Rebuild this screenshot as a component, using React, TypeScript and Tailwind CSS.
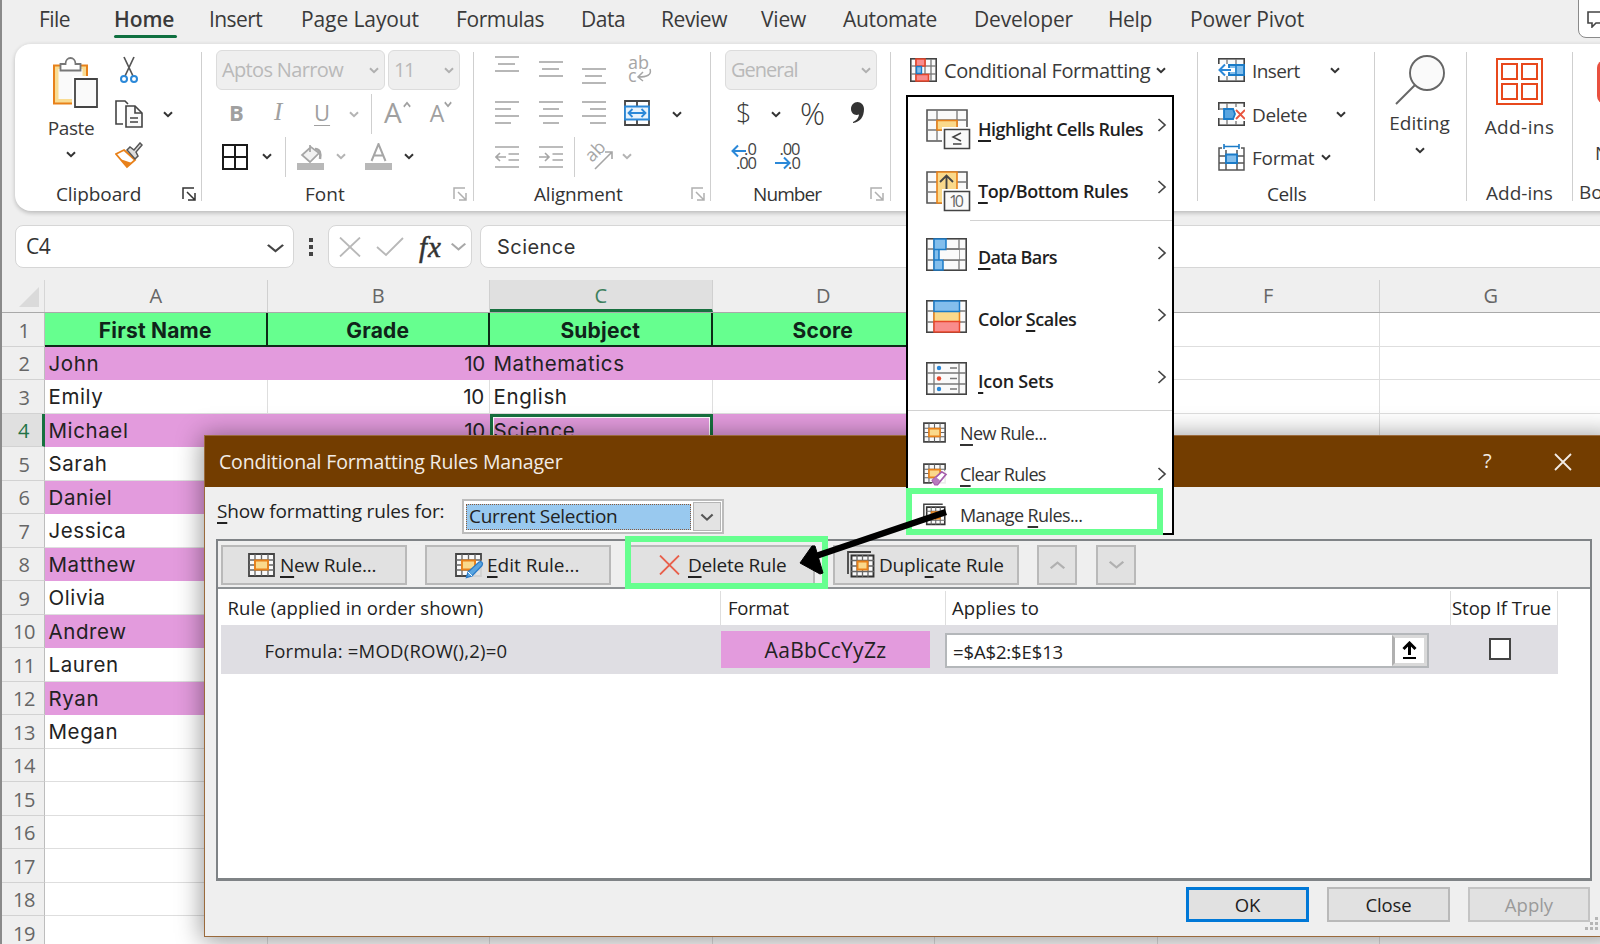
import type { ReactNode } from "react";

const cx = (...parts: (string | undefined)[]) => parts.filter(Boolean).join(" ");

/* ---------- shared primitives ---------- */

function T({ c, children }: { c?: string; children: ReactNode }) {
  return <span className={cx("block shrink-0 whitespace-nowrap", c)}>{children}</span>;
}

function Chevron({ c, color = "#333333", w = 10, sw = 2 }: { c?: string; color?: string; w?: number; sw?: number }) {
  return (
    <svg className={cx("block shrink-0", c)} width={w} height="7" viewBox="0 0 10 7" preserveAspectRatio="none" fill="none" stroke={color} strokeWidth={sw}>
      <path d="M1 1.2 5 5.2 9 1.2" />
    </svg>
  );
}

function MenuArrow() {
  return (
    <svg className="block shrink-0" width="10" height="16" viewBox="0 0 10 16" fill="none" stroke="#444" strokeWidth="1.7">
      <path d="M1.500 2 8 8l-6.500 6" />
    </svg>
  );
}

function Launcher({ c, color }: { c?: string; color: string }) {
  return (
    <svg className={cx("block shrink-0", c)} width="14" height="14" viewBox="0 0 14 14" fill="none" stroke={color} strokeWidth="1.5">
      <path d="M1 12V1h11M5 5l7.5 7.5M13 6v7H6" />
    </svg>
  );
}

function Grid({ w, h, xs, ys, children, c }: { w: number; h: number; xs: number[]; ys: number[]; children?: ReactNode; c?: string }) {
  return (
    <svg className={cx("block shrink-0", c)} width={w} height={h} viewBox={`0 0 ${w} ${h}`} fill="none">
      <rect x="0.8" y="0.8" width={w - 1.6} height={h - 1.6} fill="#fafafa" stroke="#444" strokeWidth="1.6" />
      <g stroke="#777" strokeWidth="1.3">
        {xs.map((x) => (
          <path key={`x${x}`} d={`M${x} 1V${h - 1}`} />
        ))}
        {ys.map((y) => (
          <path key={`y${y}`} d={`M1 ${y}H${w - 1}`} />
        ))}
      </g>
      {children}
    </svg>
  );
}

const Divider = () => <div className="mt-2 h-[149px] w-px shrink-0 bg-[#cfcfcf]" />;

/* ---------- ribbon icons ---------- */

const PasteIcon = () => (
  <svg className="ml-[8px] block" width="47" height="52" viewBox="0 0 47 52" fill="none">
    <path d="M2 8.500h33v38H2z" fill="#f9dc93" stroke="#e8811a" strokeWidth="2" />
    <path d="M6.500 12h24v30h-24z" fill="#fafafa" />
    <path d="M8.500 13.500V7h5c0-8 10-8 10 0h5v6.500z" fill="#fff" stroke="#777" strokeWidth="1.8" />
    <path d="M20 19h27v33H20z" fill="#fff" />
    <path d="M23 22h22v28H23z" fill="#fafafa" stroke="#444" strokeWidth="1.8" />
  </svg>
);

const ScissorsIcon = () => (
  <svg className="block" width="18" height="28" viewBox="0 0 18 28" fill="none">
    <path d="M4 1 13 20M14 1 5 20" stroke="#555" strokeWidth="1.7" />
    <circle cx="4" cy="23" r="3" stroke="#2b88d8" strokeWidth="2" />
    <circle cx="14" cy="23" r="3" stroke="#2b88d8" strokeWidth="2" />
  </svg>
);

const CopyIcon = () => (
  <svg className="block" width="28" height="28" viewBox="0 0 28 28" fill="none" stroke="#444" strokeWidth="1.6">
    <path d="M8 24H1V1h9l3 3" />
    <path d="M11 6h9l7 7v14H11z" fill="#fafafa" />
    <path d="M20 6v7h7M15 18h8M15 22h8" />
  </svg>
);

const BrushIcon = () => (
  <svg className="-mt-1 block" width="28" height="27" viewBox="0 0 28 27" fill="none">
    <path d="M9 8 20 18 12 25 1 12z" fill="#fff" stroke="#e8811a" strokeWidth="1.8" />
    <path d="M5 17 12 25l5-4z" fill="#e8811a" />
    <path d="m12 8 3-3 4 3 6-7 2 2-6 7 2 4-3 3z" fill="#ddd" stroke="#555" strokeWidth="1.5" />
  </svg>
);

const BordersIcon = ({ c }: { c?: string }) => (
  <svg className={cx("block shrink-0", c)} width="26" height="26" viewBox="0 0 26 26" fill="none" stroke="#1a1a1a" strokeWidth="2">
    <path d="M1 1h24v24H1zM13 1v24M1 13h24" />
  </svg>
);

const BucketIcon = ({ c }: { c?: string }) => (
  <svg className={cx("block shrink-0", c)} width="27" height="27" viewBox="0 0 27 27" fill="none">
    <path d="M0 20h27v7H0z" fill="#b8b8b8" />
    <path d="M13 2v7M14 4 5 12l8 7 9-9z" stroke="#a6a6a6" strokeWidth="1.7" fill="#f2f2f2" />
    <path d="M18 6c5 0 6 4 5 10" stroke="#a6a6a6" strokeWidth="2.5" />
  </svg>
);

const FontColorIcon = ({ c }: { c?: string }) => (
  <svg className={cx("block shrink-0", c)} width="27" height="27" viewBox="0 0 27 27">
    <path d="M0 20h27v7H0z" fill="#b8b8b8" />
    <path d="M6.500 18 13.500 1l7 17M9 12.500h9" stroke="#a6a6a6" strokeWidth="2" fill="none" />
  </svg>
);

function Lines({ c, rows, color = "#a6a6a6" }: { c?: string; rows: [number, number, number][]; color?: string }) {
  return (
    <svg className={cx("block shrink-0", c)} width="24" height="28" viewBox="0 0 24 28" stroke={color} strokeWidth="1.6">
      {rows.map(([y, a, b]) => (
        <path key={y} d={`M${a} ${y}H${b}`} />
      ))}
    </svg>
  );
}

const IndentIcon = ({ c, flip }: { c?: string; flip?: boolean }) => (
  <svg className={cx("block shrink-0", c)} width="24" height="24" viewBox="0 0 24 24" stroke="#a6a6a6" strokeWidth="1.6" fill="none">
    <path d="M0 2h24M13.500 9H24M13.500 15H24M0 22h24" />
    {flip ? <path d="M0 12h10M6 8l4 4-4 4" /> : <path d="M11 12H1M5 8l-4 4 4 4" />}
  </svg>
);

const WrapIcon = ({ c }: { c?: string }) => (
  <svg className={cx("block shrink-0", c)} width="26" height="30" viewBox="0 0 26 30" fill="none">
    <text x="1" y="14" fontFamily="Open Sans, sans-serif" fontSize="18" fill="#a6a6a6">ab</text>
    <text x="1" y="27" fontFamily="Open Sans, sans-serif" fontSize="18" fill="#a6a6a6">c</text>
    <path d="M23 14c2 6-3 8-12 8M16 17l-5 5 5 4" stroke="#a6a6a6" strokeWidth="1.5" />
  </svg>
);

const MergeIcon = ({ c }: { c?: string }) => (
  <svg className={cx("block shrink-0", c)} width="26" height="26" viewBox="0 0 26 26" fill="none">
    <path d="M1 1h24v24H1zM13 1v24" stroke="#444" strokeWidth="1.8" />
    <path d="M1 6.500h24v13H1z" fill="#e8f3fc" stroke="#2b88d8" strokeWidth="1.8" />
    <path d="M4.500 13h17M8.500 9l-4 4 4 4M17.500 9l4 4-4 4" stroke="#2b88d8" strokeWidth="1.800" />
  </svg>
);

const OrientationIcon = ({ c }: { c?: string }) => (
  <svg className={cx("block shrink-0", c)} width="29" height="27" viewBox="0 0 29 27" fill="none">
    <text x="0" y="0" transform="translate(7 20) rotate(-45)" fontFamily="Open Sans, sans-serif" fontSize="18" fill="#a6a6a6">ab</text>
    <path d="M10 26 27 9M20 9h7v7" stroke="#a6a6a6" strokeWidth="1.6" />
  </svg>
);

const CommaIcon = ({ c }: { c?: string }) => (
  <svg className={cx("block shrink-0", c)} width="14" height="22" viewBox="0 0 14 22" fill="#333">
    <path d="M6.500 0C10 0 13 3 13 7c0 8-4 13-11 14v-1c4-2 5.500-4 6-7.500C3.500 14 0 11 0 7s3-7 6.500-7z" />
  </svg>
);

const DecimalIcon = ({ c, inc }: { c?: string; inc?: boolean }) => (
  <svg className={cx("block shrink-0", c)} width="28" height="27" viewBox="0 0 28 27" fill="none">
    <g fontFamily="Open Sans, sans-serif" fontSize="16.5" fill="#444">
      <text x={inc ? 13 : 4.500} y="12" textLength={inc ? 13 : 21}>{inc ? ".0" : ".00"}</text>
      <text x={inc ? 5 : 13} y="26" textLength={inc ? 21 : 13}>{inc ? ".00" : ".0"}</text>
    </g>
    {inc ? (
      <path d="M15 8H1M7 2.500 1.500 8 7 13.500" stroke="#2b88d8" strokeWidth="2" />
    ) : (
      <path d="M0 20h14M9 14.500l5.500 5.500L9 25.500" stroke="#2b88d8" strokeWidth="2" />
    )}
  </svg>
);

const CondIcon = ({ c }: { c?: string }) => (
  <Grid c={c} w={27} h={24} xs={[6, 15, 21]} ys={[8, 16]}>
    <path d="M6 1h9v7H6zM6 16.500h12.500V23H6z" fill="#f98c8c" stroke="#e8452a" strokeWidth="1.6" />
    <path d="M6.500 8.500h5v7h-5z" fill="#83beec" stroke="#1a7bc8" strokeWidth="1.400" />
  </Grid>
);

const InsertCellsIcon = ({ c }: { c?: string }) => (
  <Grid c={c} w={27} h={24} xs={[9, 18]} ys={[7, 17]}>
    <path d="M0 6h10v12H0z" fill="#fff" />
    <path d="M11 7h15v10H11z" fill="#83beec" stroke="#1a7bc8" strokeWidth="1.8" />
    <path d="M18 7v10" stroke="#1a7bc8" strokeWidth="1.5" />
    <path d="M17 12H1.500M7 6.500 1.500 12 7 17.500" stroke="#fff" strokeWidth="4" />
    <path d="M13 12H1.500M7 6.500 1.500 12 7 17.500" stroke="#2b88d8" strokeWidth="2" />
  </Grid>
);

const DeleteCellsIcon = ({ c }: { c?: string }) => (
  <Grid c={c} w={27} h={24} xs={[9, 18]} ys={[7, 17]}>
    <path d="M0 8h6v8H0zM16 5h12v14H16z" fill="#fff" />
    <path d="M6 7h9l2 5-2 5H6z" fill="#5aa5e0" stroke="#1a7bc8" strokeWidth="1.8" />
    <path d="m18 8 9 9m0-9-9 9" stroke="#e8553f" strokeWidth="1.900" />
  </Grid>
);

const FormatCellsIcon = ({ c }: { c?: string }) => (
  <svg className={cx("block shrink-0", c)} width="27" height="27" viewBox="0 0 27 27" fill="none">
    <path d="M4 4H1v22h25V4h-3M1 12h25M1 19h25M8 6v20M19 6v20" stroke="#555" strokeWidth="1.5" />
    <path d="M8 10.500h11v8.500H8z" fill="#83beec" stroke="#1a7bc8" strokeWidth="1.8" />
    <path d="M6 2.500h15M6 0v5M21 0v5" stroke="#1a7bc8" strokeWidth="1.6" />
  </svg>
);

/* ---------- rule icons ---------- */

const RuleIcon = ({ c, w = 27, h = 24, extra }: { c?: string; w?: number; h?: number; extra?: "pencil" | "eraser" }) => (
  <svg className={cx("block shrink-0", c)} width={w} height={h} viewBox="0 0 27 24" fill="none" overflow="visible">
    <path d="M1 1h25v22H1z" fill="#fafafa" stroke="#444" strokeWidth="1.800" />
    <path d="M7 1v22M20 1v22M13.500 1v6M13.500 17v6M1 7h25M1 17h25M1 12h6M20 12h6" stroke="#666" strokeWidth="1.3" />
    <path d="M7 7.500h13v9H7z" fill="#fad98b" stroke="#e8811a" strokeWidth="1.900" />
    {extra === "pencil" && (
      <g>
        <path d="M10 25 28 6v20z" fill="#e1e1e1" opacity="0.9" />
        <path d="M11.500 24.500 13 19 24 9c2.500-1 4.500 1 3 3.500L17 23z" fill="#5aa5e0" stroke="#2b7cc8" strokeWidth="1.3" />
        <path d="m13 19 4 4" stroke="#fff" strokeWidth="1" />
      </g>
    )}
    {extra === "eraser" && (
      <g>
        <path d="M9 25 28 6v20z" fill="#fff" opacity="0.9" />
        <path d="m11 20 11-10 5 3-10 12h-3z" fill="#fff" stroke="#a55cab" strokeWidth="1.900" />
        <path d="m11 20 4-4 5 4-4 5h-2z" fill="#b77abd" />
      </g>
    )}
  </svg>
);

const StackedRuleIcon = ({ w = 28, h = 27 }: { w?: number; h?: number }) => (
  <svg className="block shrink-0" width={w} height={h} viewBox="0 0 28 27" fill="none">
    <path d="M1 23V1h23" stroke="#444" strokeWidth="1.800" />
    <path d="M4.500 4.500h22v21h-22z" fill="#fafafa" stroke="#333" strokeWidth="1.900" />
    <path d="M10 4v22M15.500 4v22M21 4v22M4 9.500h23M4 15h23M4 20.500h23" stroke="#666" strokeWidth="1.3" />
    <path d="M10.500 10.500h10v8h-10z" fill="#fad98b" stroke="#e8811a" strokeWidth="1.900" />
  </svg>
);

const HighlightIcon = () => (
  <svg className="block" width="45" height="41" viewBox="0 0 45 41" fill="none">
    <path d="M1 1h40v31H1z" fill="#fafafa" stroke="#555" strokeWidth="1.6" />
    <path d="M11 1v31M31 1v31M1 11h40M1 21h40" stroke="#777" strokeWidth="1.3" />
    <path d="M11 11.500h20v9.500H11z" fill="#fad98b" stroke="#e8811a" strokeWidth="1.6" />
    <path d="M16 18h29v23H16z" fill="#fff" />
    <path d="M18.500 20.500h25v19h-25z" fill="#fafafa" stroke="#444" strokeWidth="1.6" />
    <path d="m35 24-8 4 8 4M27 35h8.500" stroke="#444" strokeWidth="1.5" />
  </svg>
);

const TopBottomIcon = () => (
  <svg className="block" width="45" height="41" viewBox="0 0 45 41" fill="none">
    <path d="M1 1h40v31H1z" fill="#fafafa" stroke="#555" strokeWidth="1.6" />
    <path d="M1 11h40M1 21h40" stroke="#777" strokeWidth="1.3" />
    <path d="M11 1h20v31H11z" fill="#fad98b" stroke="#e8811a" strokeWidth="1.6" />
    <path d="M20.500 22V5M14 11l6.500-6.500L27 11" stroke="#444" strokeWidth="1.900" />
    <path d="M16 18h29v23H16z" fill="#fff" />
    <path d="M18.500 20.500h25v19h-25z" fill="#fafafa" stroke="#444" strokeWidth="1.6" />
    <text x="23" y="36" fontFamily="Open Sans, sans-serif" fontSize="16" fill="#666" textLength="15">10</text>
  </svg>
);

const DataBarsIcon = () => (
  <Grid w={41} h={33} xs={[8, 33]} ys={[11, 22]}>
    <path d="M13 12h20v10H13z" fill="#fafafa" />
    <path d="M8 1h12v10.500H8zM8 11.500h5V22H8zM8 22h9v10H8z" fill="#83beec" stroke="#1a7bc8" strokeWidth="1.5" />
    <path d="M20 11h13M17 22h16" stroke="#777" strokeWidth="1.3" />
  </Grid>
);

const ColorScalesIcon = () => (
  <Grid w={41} h={33} xs={[8, 33]} ys={[11, 22]}>
    <path d="M8 11h25.500v11H8z" fill="#fad98b" stroke="#e8811a" strokeWidth="1.5" />
    <path d="M8 1h25.500v10.500H8z" fill="#83beec" stroke="#1a7bc8" strokeWidth="1.5" />
    <path d="M8 21.500h25.500V32H8z" fill="#f98c8c" stroke="#e8452a" strokeWidth="1.5" />
  </Grid>
);

const IconSetsIcon = () => (
  <Grid w={41} h={33} xs={[8, 33]} ys={[11, 22]}>
    <circle cx="13" cy="6" r="2.200" fill="#2b88d8" />
    <circle cx="13" cy="16.500" r="2.200" fill="#e8452a" />
    <circle cx="13" cy="27" r="2.200" fill="#2b88d8" />
    <path d="M24 6h7M24 16.500h7M24 27h7" stroke="#777" strokeWidth="1.4" />
  </Grid>
);

/* ---------- tab bar ---------- */

const TABS: [string, string][] = [
  ["File", "w-[75px] tracking-[-0.56px]"],
  ["Home", "w-[95px] font-semibold tracking-[-0.1px]"],
  ["Insert", "w-[92px] tracking-[-0.6px]"],
  ["Page Layout", "w-[155px] tracking-[-0.1px]"],
  ["Formulas", "w-[125px] tracking-[-0.4px]"],
  ["Data", "w-[80px] tracking-[-0.5px]"],
  ["Review", "w-[100px] tracking-[-0.43px]"],
  ["View", "w-[82px] tracking-[-0.2px]"],
  ["Automate", "w-[131px] tracking-[-0.33px]"],
  ["Developer", "w-[134px] tracking-[-0.16px]"],
  ["Help", "w-[82px] tracking-[-0.36px]"],
  ["Power Pivot", "w-[388px] tracking-[-0.17px]"],
];

function TabBar() {
  return (
    <div className="flex h-[43px] pl-[39px] text-[21px] leading-[39px] text-[#3a3a3a]">
      {TABS.map(([name, c]) => (
        <div key={name} className={cx("shrink-0 whitespace-nowrap", c)}>
          {name}
          {name === "Home" && <div className="-mt-1 h-[3px] w-[63px] rounded-full bg-[#0f7040]" />}
        </div>
      ))}
      <div className="-mt-2 flex h-[46px] w-12 shrink-0 items-center rounded-lg border-[1.5px] border-[#8a8a8a] bg-white pt-2 pl-2">
        <svg width="24" height="17" viewBox="0 0 24 17" fill="none" stroke="#444" strokeWidth="1.6">
          <path d="M1 1h22v11H9l-4 4v-4H1z" />
        </svg>
      </div>
    </div>
  );
}

/* ---------- ribbon ---------- */

const row = "flex h-11 items-center";
const row3 = "flex h-[43px] items-center pb-0.5";
const footer = "flex h-8 items-center pb-0.5 text-[19px] text-[#333]";

function Combo({ w, label, c }: { w: string; label: string; c: string }) {
  return (
    <div className={cx("flex h-10 shrink-0 items-center justify-between rounded-md border border-[#dcdcdc] bg-[#efefef] pr-[5px] pl-[5px] text-[20px] leading-[36px] text-[#b9b9b9]", w)}>
      <T c={c}>{label}</T>
      <Chevron color="#b0b0b0" />
    </div>
  );
}

function Ribbon() {
  return (
    <div className="ml-[15px] flex h-[168px] w-[1640px] rounded-2xl border-t border-[#e4e4e4] bg-white text-[19px] text-[#3a3a3a] shadow-[0_2px_4px_rgba(0,0,0,0.22)]">
      {/* clipboard */}
      <div className="flex w-[186px] shrink-0 flex-col pt-1">
        <div className="flex h-[131px]">
          <div className="flex w-[80px] flex-col items-center pt-[9px] pl-[32px]">
            <PasteIcon />
            <T c="mt-[6px] leading-[26px] tracking-[-0.4px]">Paste</T>
            <Chevron c="mt-2.5" />
          </div>
          <div className="ml-5 flex flex-col">
            <div className="flex h-11 items-center pl-[5px]"><ScissorsIcon /></div>
            <div className={row}><CopyIcon /><Chevron c="ml-[20px]" /></div>
            <div className="flex h-[42px] items-center"><BrushIcon /></div>
          </div>
        </div>
        <div className={cx(footer, "pl-[41px]")}>
          <T c="w-[126px] tracking-[-0.1px]">Clipboard</T>
          <Launcher color="#333" />
        </div>
      </div>
      <Divider />
      {/* font */}
      <div className="flex w-[271px] shrink-0 flex-col pt-1 pl-[14px]">
        <div className={row}>
          <Combo w="w-[169px]" label="Aptos Narrow" c="tracking-[-0.65px]" />
          <div className="w-[3px]" />
          <Combo w="w-[72px]" label="11" c="tracking-[-1.5px]" />
        </div>
        <div className={cx(row, "text-[22px] text-[#a0a0a0]")}>
          <T c="-mt-1 ml-[13px] w-[44px] font-bold">B</T>
          <T c="-mt-1 w-[41px] pl-px font-['Liberation_Serif'] text-[25px] italic">I</T>
          <T c="-mt-1 w-[35px] underline decoration-1 underline-offset-4">U</T>
          <Chevron color="#b4b4b4" />
          <div className="ml-3 h-10 w-px bg-[#cfcfcf]" />
          <T c="-mt-1 ml-[12px] text-[28px]">A</T>
          <Chevron c="mb-5 ml-px w-2 rotate-180" color="#a0a0a0" />
          <T c="-mt-0.5 ml-[19px] text-[23px]">A</T>
          <Chevron c="mb-5 w-2" color="#a0a0a0" />
        </div>
        <div className={row3}>
          <BordersIcon c="ml-[6px]" />
          <Chevron c="ml-[14px]" />
          <div className="ml-[13px] h-10 w-px bg-[#cfcfcf]" />
          <BucketIcon c="ml-[11px]" />
          <Chevron c="ml-[12px]" color="#b4b4b4" />
          <FontColorIcon c="ml-[19px]" />
          <Chevron c="ml-[12px]" />
        </div>
        <div className={cx(footer, "pl-[89px]")}>
          <T c="w-[148px]">Font</T>
          <Launcher color="#b0b0b0" />
        </div>
      </div>
      <Divider />
      {/* alignment */}
      <div className="flex w-[236px] shrink-0 flex-col pt-1 pl-[21px]">
        <div className={row}>
          <Lines rows={[[1, 0, 24], [8, 3, 20], [15, 0, 24]]} />
          <Lines c="ml-[20px]" rows={[[6, 0, 24], [13, 3, 20], [20, 0, 24]]} />
          <Lines c="ml-[19px]" rows={[[13, 0, 24], [20, 3, 20], [27, 0, 24]]} />
          <WrapIcon c="ml-[21px]" />
        </div>
        <div className={row}>
          <Lines c="-mt-0.5" rows={[[3, 0, 24], [10, 0, 16], [17, 0, 24], [24, 0, 16]]} />
          <Lines c="-mt-0.5 ml-[20px]" rows={[[3, 0, 24], [10, 4, 20], [17, 0, 24], [24, 4, 20]]} />
          <Lines c="-mt-0.5 ml-[19px]" rows={[[3, 0, 24], [10, 8, 24], [17, 0, 24], [24, 8, 24]]} />
          <MergeIcon c="-mt-0.5 ml-[18px]" />
          <Chevron c="ml-[22px]" />
        </div>
        <div className={row3}>
          <IndentIcon />
          <IndentIcon c="ml-[20px]" flip />
          <div className="ml-[11px] h-10 w-px bg-[#cfcfcf]" />
          <OrientationIcon c="ml-[10px]" />
          <Chevron c="ml-[8px]" color="#b4b4b4" />
        </div>
        <div className={cx(footer, "pl-[39px]")}>
          <T c="w-[157px] tracking-[-0.2px]">Alignment</T>
          <Launcher color="#b0b0b0" />
        </div>
      </div>
      <Divider />
      {/* number */}
      <div className="flex w-[179px] shrink-0 flex-col pt-1 pl-[14px]">
        <div className={row}>
          <Combo w="w-[152px]" label="General" c="tracking-[-1px]" />
        </div>
        <div className={row}>
          <T c="-mt-0.5 ml-[11px] w-[34px] text-[27px] leading-[40px] font-light">$</T>
          <Chevron c="ml-px" />
          <T c="-mt-0.5 ml-[19px] w-[46px] text-[31px] leading-[40px] font-light">%</T>
          <CommaIcon c="-mt-0.5 ml-[5px]" />
        </div>
        <div className={row3}>
          <DecimalIcon c="ml-[6px]" inc />
          <DecimalIcon c="ml-[16px]" />
        </div>
        <div className={cx(footer, "pl-[28px]")}>
          <T c="w-[117px] tracking-[-0.9px]">Number</T>
          <Launcher color="#b0b0b0" />
        </div>
      </div>
      <Divider />
      {/* styles */}
      <div className="flex w-[306px] shrink-0 flex-col pt-1 pl-[19px]">
        <div className={row}>
          <CondIcon />
          <T c="mt-0.5 ml-[7px] text-[20px] tracking-[-0.38px]">Conditional Formatting</T>
          <Chevron c="ml-[6px]" />
        </div>
      </div>
      <Divider />
      {/* cells */}
      <div className="flex w-[176px] shrink-0 flex-col pt-1 pl-[20px]">
        <div className={row}>
          <InsertCellsIcon />
          <T c="mt-0.5 ml-[7px] w-[78px] tracking-[-0.6px]">Insert</T>
          <Chevron />
        </div>
        <div className={row}>
          <DeleteCellsIcon />
          <T c="mt-0.5 ml-[7px] w-[84px] tracking-[-0.4px]">Delete</T>
          <Chevron />
        </div>
        <div className="flex h-[43px] items-center">
          <FormatCellsIcon />
          <T c="mt-0.5 ml-[7px] w-[69px] tracking-[-0.3px]">Format</T>
          <Chevron />
        </div>
        <div className={cx(footer, "pl-[49px]")}>
          <T c="tracking-[-0.4px]">Cells</T>
        </div>
      </div>
      <Divider />
      {/* editing */}
      <div className="flex w-[89px] shrink-0 flex-col items-center pt-[11px]">
        <svg width="50" height="50" viewBox="0 0 50 50" fill="none" stroke="#666" strokeWidth="1.900">
          <circle cx="32" cy="18" r="17" fill="#fafafa" />
          <path d="M20 30 1 49" />
        </svg>
        <T c="mt-[5px] leading-[26px]">Editing</T>
        <Chevron c="mt-[11px]" />
      </div>
      <div className="w-0.5 shrink-0" />
      <Divider />
      {/* add-ins */}
      <div className="flex w-[105px] shrink-0 flex-col items-center pt-[14px]">
        <svg width="47" height="47" viewBox="0 0 47 47" fill="none" stroke="#e8481c" strokeWidth="2">
          <path d="M1 1h45v45H1z" />
          <path d="M6 6h15v15H6zM26 6h15v15H26zM6 26h15v15H6zM26 26h15v15H26z" />
        </svg>
        <T c="mt-[9px] leading-[26px] tracking-[0.4px]">Add-ins</T>
        <T c="mt-[40px] leading-[26px]">Add-ins</T>
      </div>
      <Divider />
      <div className="flex w-[60px] shrink-0 flex-col pt-[16px]">
        <div className="ml-[24px] h-11 w-9 rounded-lg bg-[#e9503f]" />
        <T c="mt-[36px] ml-[22px] leading-[26px]">N</T>
        <T c="mt-[13px] ml-[6px] leading-[26px]">Bo</T>
      </div>
    </div>
  );
}

/* ---------- formula bar ---------- */

const field = "flex h-[43px] shrink-0 items-center rounded-lg border border-[#d6d6d6] bg-white";

function FormulaBar() {
  return (
    <div className="mt-[14px] flex w-[1700px] items-center pl-[15px] text-[20px] text-[#333]">
      <div className={cx(field, "w-[279px] justify-between pr-[8px] pl-[10px]")}>
        <T c="font-['Open_Sans'] text-[21px] tracking-[-0.5px]">C4</T>
        <Chevron w={19} c="mt-1 h-[11px]" sw={1.300} color="#444" />
      </div>
      <div className="ml-[15px] flex w-[4px] flex-col gap-[3px]">
        <div className="size-[4px] bg-[#444]" />
        <div className="size-[4px] bg-[#444]" />
        <div className="size-[4px] bg-[#444]" />
      </div>
      <div className={cx(field, "ml-[15px] w-[144px] pl-[10px]")}>
        <svg width="22" height="20" viewBox="0 0 22 20" stroke="#b8b8b8" strokeWidth="1.8">
          <path d="M1 0.500 21 19.500M21 0.500 1 19.500" />
        </svg>
        <svg className="ml-[15px]" width="28" height="20" viewBox="0 0 28 20" fill="none" stroke="#b8b8b8" strokeWidth="1.8">
          <path d="m1 10 9 8L27 1" />
        </svg>
        <T c="ml-[15px] w-[31px] font-['Liberation_Serif'] text-[29px] leading-[36px] font-normal italic tracking-[1px] [-webkit-text-stroke:0.5px_#333]">fx</T>
        <Chevron w={17} c="h-[10px]" sw={1.300} color="#a8a8a8" />
      </div>
      <div className={cx(field, "ml-2 w-[1200px] pl-[16px]")}>
        <T c="font-['Inter'] tracking-[0.45px]">Science</T>
      </div>
    </div>
  );
}

/* ---------- worksheet ---------- */

const COLS = ["A", "B", "C", "D", "E", "F", "G"];
const HEADERS = ["First Name", "Grade", "Subject", "Score", "", "", ""];
const DATA: string[][] = [
  ["John", "10", "Mathematics"],
  ["Emily", "10", "English"],
  ["Michael", "10", "Science"],
  ["Sarah"],
  ["Daniel"],
  ["Jessica"],
  ["Matthew"],
  ["Olivia"],
  ["Andrew"],
  ["Lauren"],
  ["Ryan"],
  ["Megan"],
];

function RowHeader({ n, active }: { n: number; active?: boolean }) {
  return (
    <div
      className={cx(
        "flex w-[43px] shrink-0 items-center justify-center border-b border-[#d2d2d2] pt-[3px] text-[20px] tracking-[-0.4px]",
        active ? "border-r-[3px] border-r-[#17703f] bg-[#e0e0e0] pl-[3px] text-[#217346]" : "border-r border-r-[#bdbdbd] pl-[2px] text-[#666]"
      )}
    >
      {n}
    </div>
  );
}

function Sheet() {
  return (
    <div className="mt-[12px] ml-[2px] w-[1601px]">
      <div className="flex h-[33px] border-b border-[#a9a9a9]">
        <div className="flex w-[43px] shrink-0 items-end justify-end border-r border-[#d6d6d6] pr-[5px] pb-[5px]">
          <svg width="20" height="20" viewBox="0 0 20 20" fill="#dadada">
            <path d="M20 0v20H0z" />
          </svg>
        </div>
        {COLS.map((col) => (
          <div
            key={col}
            className={cx(
              "flex w-[222.5px] shrink-0 items-center justify-center border-r border-[#d0d0d0] text-[20px]",
              col === "C" ? "border-b-[3px] border-b-[#17703f] bg-[#e0e0e0] pt-[3px] text-[#3d7f5c]" : "text-[#666]"
            )}
          >
            {col}
          </div>
        ))}
      </div>
      <div className="flex h-[33.500px]">
        <RowHeader n={1} />
        {HEADERS.map((h, i) => (
          <div
            key={i}
            className={cx(
              "flex w-[222.5px] shrink-0 items-center justify-center pt-[4px] font-['Inter'] text-[21px] font-bold tracking-[0.2px] text-[#10241a]",
              i < 5 ? "border-r-2 border-b-2 border-[#0d2b18] bg-[#66ff8f]" : "border-r border-b border-[#dedede] bg-white"
            )}
          >
            {h}
          </div>
        ))}
      </div>
      {Array.from({ length: 18 }, (_, r) => {
        const n = r + 2;
        const data = DATA[r] ?? [];
        const pink = n % 2 === 0 && n <= 13;
        return (
          <div key={n} className="flex h-[33.500px]">
            <RowHeader n={n} active={n === 4} />
            {COLS.map((col, i) => (
              <div
                key={col}
                className={cx(
                  "flex w-[222.5px] shrink-0 items-center pt-[3px] pr-[5px] pl-[3.500px] font-['Inter'] text-[20.500px] text-[#222]",
                  i === 1 ? "justify-end tracking-[-0.2px]" : "tracking-[0.6px]",
                  pink && i < 5 ? "bg-[#e39bdd]" : "border-r border-b border-[#dedede] bg-white",
                  n === 4 && i === 2 ? "shadow-[inset_0_0_0_3px_#17703f,inset_0_0_0_4px_#fff]" : undefined
                )}
              >
                {data[i] ?? ""}
              </div>
            ))}
          </div>
        );
      })}
    </div>
  );
}

/* ---------- conditional formatting menu ---------- */

const Key = ({ children }: { children: ReactNode }) => (
  <span className="underline decoration-[1.5px] underline-offset-[4px]">{children}</span>
);

function BigItem({ icon, children, c, lower }: { icon: ReactNode; children: ReactNode; c: string; lower?: boolean }) {
  return (
    <div className="flex h-[62px] items-center pl-[18px]">
      <div className={cx("w-[52px] shrink-0", lower ? "-mt-0.5" : undefined)}>{icon}</div>
      <T c={cx("w-[179px] text-[18px] font-semibold text-[#1f1f1f]", lower ? "pt-1" : "", c)}>{children}</T>
      <div className={lower ? "-mt-1" : "-mt-2"}><MenuArrow /></div>
    </div>
  );
}

function SmallItem({ icon, children, arrow, c }: { icon: ReactNode; children: ReactNode; arrow?: boolean; c: string }) {
  return (
    <div className="flex h-[41px] items-center pl-[15px]">
      <div className="w-[37px] shrink-0">{icon}</div>
      <T c={cx("w-[197px] pt-0.5 text-[18px] text-[#333]", c)}>{children}</T>
      {arrow && <MenuArrow />}
    </div>
  );
}

function CfMenu() {
  return (
    <div className="absolute top-[95px] left-[906px] h-[440px] w-[268px] border-2 border-black bg-white pt-px">
      <BigItem icon={<HighlightIcon />} c="tracking-[-0.5px]"><Key>H</Key>ighlight Cells Rules</BigItem>
      <BigItem icon={<TopBottomIcon />} c="tracking-[-0.4px]"><Key>T</Key>op/Bottom Rules</BigItem>
      <div className="-mt-[2px] ml-[62px] h-px bg-[#d2d2d2]" />
      <div className="h-[3px]" />
      <BigItem lower icon={<DataBarsIcon />} c="tracking-[-0.65px]"><Key>D</Key>ata Bars</BigItem>
      <BigItem lower icon={<ColorScalesIcon />} c="tracking-[-0.5px]">Color <Key>S</Key>cales</BigItem>
      <BigItem lower icon={<IconSetsIcon />} c="tracking-[-0.25px]"><Key>I</Key>con Sets</BigItem>
      <div className="mb-px h-px bg-[#d2d2d2]" />
      <SmallItem icon={<RuleIcon w={23} h={21} />} c="tracking-[-0.6px]"><Key>N</Key>ew Rule...</SmallItem>
      <SmallItem icon={<RuleIcon w={23} h={21} extra="eraser" />} arrow c="tracking-[-0.7px]"><Key>C</Key>lear Rules</SmallItem>
      <SmallItem icon={<StackedRuleIcon w={23} h={23} />} c="tracking-[-0.6px]">Manage <Key>R</Key>ules...</SmallItem>
    </div>
  );
}

/* ---------- rules manager dialog ---------- */

function DlgButton({ w, icon, children, c, pl }: { w: string; icon: ReactNode; children: ReactNode; c?: string; pl: string }) {
  return (
    <div className={cx("flex h-10 shrink-0 items-center gap-[5px] border-2 border-[#b9b9b9] bg-[#e1e1e1] text-[19px] text-[#222]", w, pl)}>
      {icon}
      <T c={cx("pt-px", c)}>{children}</T>
    </div>
  );
}

function Dialog() {
  return (
    <div className="absolute top-[435px] left-[204px] flex h-[502px] w-[1410px] flex-col border border-[#9a6a3c] bg-[#efefef] text-[18.500px] text-[#222] shadow-[0_2px_24px_2px_rgba(0,0,0,0.4)]">
      <div className="flex h-[51px] shrink-0 items-center bg-[#733d00] pl-[14px] text-[19.500px] text-[#f2ece6]">
        <T c="w-[1264px] tracking-[-0.16px]">Conditional Formatting Rules Manager</T>
        <T c="-mt-0.5 w-[71px] text-[20px]">?</T>
        <svg width="18" height="18" viewBox="0 0 18 18" stroke="#f2ece6" strokeWidth="1.800">
          <path d="m1 1 16 16M17 1 1 17" />
        </svg>
      </div>
      <div className="flex h-[52px] shrink-0 pt-[12px] pl-[12px]">
        <T c="w-[245px] text-[19px] leading-[24px] tracking-[-0.16px]"><Key>S</Key>how formatting rules for:</T>
        <div className="flex h-[35px] w-[262px] items-center border-2 border-[#bcbcbc] bg-white pl-[2px]">
          <div className="h-[26px] w-[225px] border-[1.5px] border-dotted border-[#8a5a3a] bg-[#99c9ef] pl-[2px] text-[19px] leading-[22px] tracking-[-0.3px]">Current Selection</div>
          <div className="ml-[2px] flex h-[29px] w-[28px] items-center justify-center border border-[#b5b5b5] bg-[#e3e3e3]">
            <Chevron w={14} c="mt-0.5 h-[9px]" sw={1.500} color="#555" />
          </div>
        </div>
      </div>
      <div className="ml-[11px] flex h-[342px] w-[1376px] shrink-0 flex-col border-2 border-b-[3px] border-[#7f8386]">
        <div className="flex h-[48px] shrink-0 items-center border-b-2 border-[#8d9194] pt-px pl-[3px]">
          <DlgButton w="w-[186px]" pl="pl-[25px]" icon={<RuleIcon />} c="tracking-[-0.2px]"><Key>N</Key>ew Rule...</DlgButton>
          <div className="w-[18px]" />
          <DlgButton w="w-[186px]" pl="pl-[28px]" icon={<RuleIcon extra="pencil" />}><Key>E</Key>dit Rule...</DlgButton>
          <div className="w-[18px]" />
          <DlgButton
            w="w-[186px]"
            pl="pl-[28px]"
            icon={
              <svg className="mr-[3px] block" width="21" height="20" viewBox="0 0 21 20" stroke="#e8604c" strokeWidth="1.800">
                <path d="m1 0.500 19 19M20 0.500l-19 19" />
              </svg>
            }
            c="tracking-[-0.25px]"
          >
            <Key>D</Key>elete Rule
          </DlgButton>
          <div className="w-[18px]" />
          <DlgButton w="w-[186px]" pl="pl-[12px]" icon={<StackedRuleIcon />} c="-ml-px tracking-[-0.2px]">Dupli<Key>c</Key>ate Rule</DlgButton>
          <div className="ml-[18px] flex h-10 w-10 items-center justify-center border-2 border-[#b9b9b9] bg-[#e1e1e1]">
            <Chevron w={17} c="h-[10px] rotate-180" sw={1.400} color="#b0b0b0" />
          </div>
          <div className="ml-[19px] flex h-10 w-10 items-center justify-center border-2 border-[#b9b9b9] bg-[#e1e1e1]">
            <Chevron w={17} c="h-[10px]" sw={1.400} color="#b0b0b0" />
          </div>
        </div>
        <div className="flex-1 bg-white pl-[3px]">
          <div className="flex h-[36px] w-[1337px] pt-[2px] leading-[33px]">
            <div className="w-[500px] shrink-0 border-r border-[#dedede] pl-[6.500px]"><T c="tracking-[0.1px]">Rule (applied in order shown)</T></div>
            <div className="w-[225px] shrink-0 border-r border-[#dedede] pl-[7px]"><T c="tracking-[-0.25px]">Format</T></div>
            <div className="w-[505px] shrink-0 border-r border-[#dedede] pl-[6px]"><T c="tracking-[0.15px]">Applies to</T></div>
            <div className="w-[107px] shrink-0 border-r border-[#dedede]"><T c="pl-px tracking-[-0.05px]">Stop If True</T></div>
          </div>
          <div className="flex h-[49px] w-[1337px] items-center bg-[#dfdee3]">
            <T c="w-[500px] pt-0.5 pl-[43.500px] tracking-[0.22px]">Formula: =MOD(ROW(),2)=0</T>
            <div className="h-[37px] w-[209px] bg-[#e39bdd] pt-px text-center font-['Open_Sans'] text-[21px] leading-[36px] tracking-[0.3px]">AaBbCcYyZz</div>
            <div className="mt-px ml-[15px] flex h-[35px] w-[484px] items-stretch border-2 border-[#b4b7ba] bg-white">
              <div className="w-[445px] pl-[6px] leading-[33px] tracking-[-0.13px]">=$A$2:$E$13</div>
              <div className="flex flex-1 items-center justify-center border-[3px] border-[#d9d9d9] border-l-[#b0b0b0] bg-white">
                <svg width="15" height="18" viewBox="0 0 15 18" fill="none" stroke="#000">
                  <path d="M7.500 14V3M1.500 8l6-6 6 6" strokeWidth="3" />
                  <path d="M1 17h13" strokeWidth="2" />
                </svg>
              </div>
            </div>
            <div className="-mt-0.5 ml-[60px] size-[22px] border-2 border-[#444] bg-white" />
          </div>
        </div>
      </div>
      <div className="flex pt-[6px] pl-[981px] text-center leading-[31px]">
        <div className="h-[35px] w-[123px] border-[3px] border-[#0078d7] bg-[#e1e1e1] leading-[30px]">OK</div>
        <div className="ml-[18px] h-[35px] w-[123px] border-2 border-[#b9b9b9] bg-[#e1e1e1] tracking-[-0.1px]">Close</div>
        <div className="ml-[18px] h-[35px] w-[122px] border-2 border-[#c4c4c4] bg-[#e1e1e1] text-[#9a9a9a]">Apply</div>
        <svg className="mt-[30px] -ml-[5px]" width="14" height="14" viewBox="0 0 14 14" fill="#b5b5b5">
          <path d="M0 10h3v3H0zM5 10h3v3H5zM10 10h3v3h-3zM5 5h3v3H5zM10 5h3v3h-3zM10 0h3v3h-3z" />
        </svg>
      </div>
    </div>
  );
}

/* ---------- annotations ---------- */

function Annotations() {
  return (
    <>
      <div className="absolute top-[488px] left-[906px] h-[47px] w-[257px] border-[6px] border-[#66ff8f]" />
      <div className="absolute top-[536px] left-[625px] h-[53px] w-[203px] border-[6px] border-[#66ff8f]" />
      <svg className="absolute top-[500px] left-[790px]" width="170" height="80" viewBox="0 0 170 80">
        <path d="M156 12 26 56" stroke="#000" strokeWidth="6.500" />
        <path d="M10 63 22 46l3 0 8 27-3 1z" stroke="#000" strokeWidth="1" strokeLinejoin="round" />
      </svg>
    </>
  );
}

export default function App() {
  return (
    <div className="relative h-[944px] w-[1600px] overflow-hidden bg-[#efefef] font-['Open_Sans',sans-serif]">
      <TabBar />
      <Ribbon />
      <FormulaBar />
      <Sheet />
      <div className="absolute top-0 left-0 h-full w-[2px] bg-[#8a8a8a]" />
      <Dialog />
      <CfMenu />
      <Annotations />
    </div>
  );
}
